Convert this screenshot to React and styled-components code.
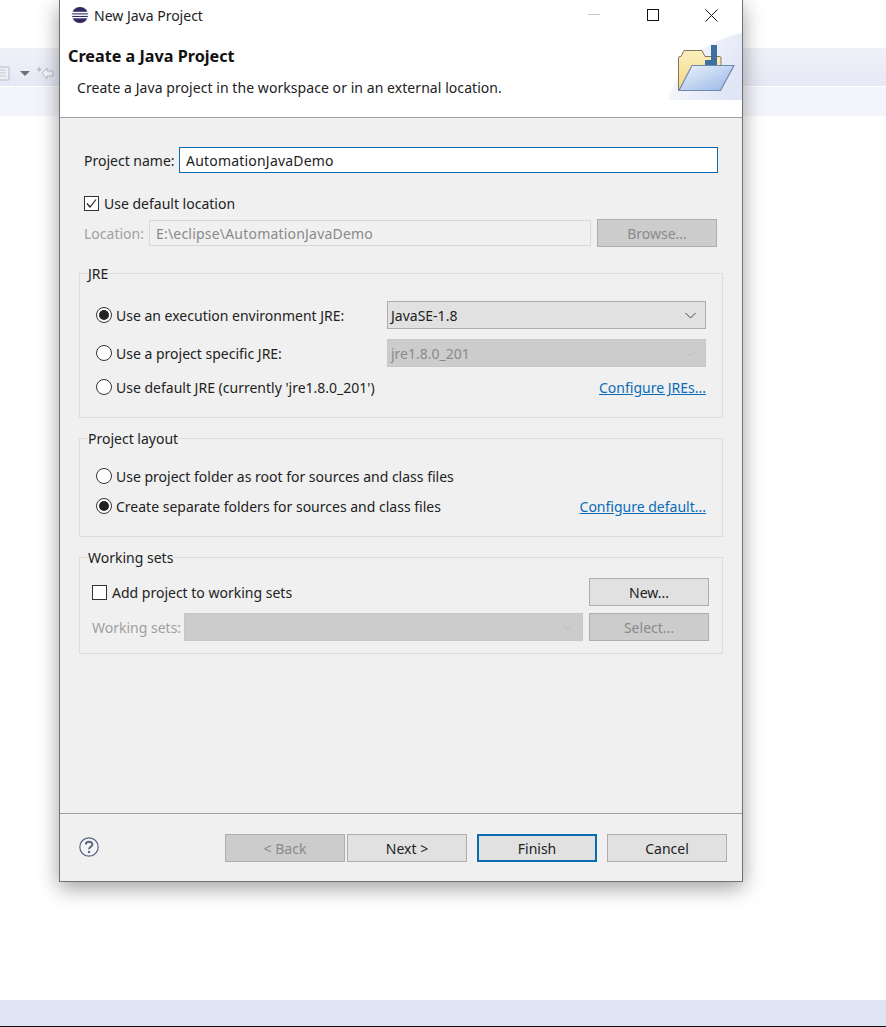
import React from "react";
import styled, { createGlobalStyle } from "styled-components";

const GlobalStyle = createGlobalStyle`
  html, body {
    margin: 0;
    padding: 0;
    background: #fff;
  }
  body {
    font-family: "Noto Sans", "Open Sans", Arial, sans-serif;
    font-size: 14px;
    color: #1a1a1a;
  }
`;

const Desktop = styled.div`
  position: relative;
  width: 886px;
  height: 1027px;
  overflow: hidden;
  display: flex;
  flex-direction: column;
  background: #fff;
`;

const Toolbar = styled.div`
  margin-top: 48px;
  height: 38px;
  flex: none;
  box-sizing: content-box;
  padding-top: 0;
  display: flex;
  align-items: flex-end;
  background: linear-gradient(#f0f1f6 0, #f0f1f6 4px, #eef0f9 5px, #e6e9f5 100%);
  border-bottom: 1px solid #fff;
`;

const SubBar = styled.div`
  height: 29px;
  flex: none;
  background: #f4f5fb;
`;

const BottomBand = styled.div`
  margin-top: auto;
  height: 26px;
  flex: none;
  background: #dfe4f4;
  border-bottom: 1px solid #111;
`;

const Dialog = styled.div`
  position: absolute;
  left: 59px;
  top: 0;
  width: 684px;
  height: 882px;
  box-sizing: border-box;
  border: 1px solid #717171;
  border-top: none;
  background: #f0f0f0;
  display: flex;
  flex-direction: column;
  box-shadow: 0 6px 20px rgba(0, 0, 0, 0.38);
`;

const TitleBar = styled.div`
  height: 30px;
  flex: none;
  background: #fff;
  display: flex;
  align-items: center;
  padding: 0 1px 0 11px;
  gap: 5px;
  font-size: 14px;
  color: #222;
`;

const WindowButtons = styled.div`
  margin-left: auto;
  display: flex;
  align-items: center;
`;

const WindowButton = styled.div`
  width: 59px;
  height: 30px;
  display: flex;
  align-items: center;
  justify-content: center;
`;

const Banner = styled.div`
  height: 88px;
  flex: none;
  box-sizing: border-box;
  background: #fff;
  border-bottom: 1px solid #a0a0a0;
  display: flex;
  justify-content: space-between;
  align-items: flex-start;
`;

const BannerText = styled.div`
  padding: 15px 0 0 8px;
`;

const BannerTitle = styled.div`
  font-weight: 700;
  font-size: 16.2px;
  line-height: 22px;
  color: #111;
`;

const BannerDesc = styled.div`
  margin: 10px 0 0 9px;
  line-height: 22px;
  letter-spacing: 0.06px;
  color: #222;
`;

const BannerArt = styled.svg`
  width: 76px;
  height: 70px;
  flex: none;
`;

const Form = styled.div`
  flex: 1;
  padding: 29px 19px 0;
  border-bottom: 1px solid #a0a0a0;
`;

const Row = styled.div`
  display: flex;
  align-items: center;
  min-height: ${(p) => p.$h || 20}px;
  margin-top: ${(p) => p.$top || 0}px;
  padding-left: ${(p) => p.$indent || 0}px;
  padding-right: ${(p) => p.$end || 0}px;
`;

const Label = styled.span`
  height: 20px;
  line-height: 22px;
  white-space: nowrap;
  color: ${(p) => (p.$off ? "#a0a0a0" : "#222")};
  width: ${(p) => (p.$w ? `${p.$w}px` : "auto")};
  flex: none;
`;

const TextField = styled.div`
  box-sizing: border-box;
  height: 26px;
  flex: 1;
  padding: 0 6px;
  display: flex;
  align-items: center;
  letter-spacing: 0.2px;
  border: 1px solid ${(p) => (p.$off ? "#d9d9d9" : "#0a6cb0")};
  background: ${(p) => (p.$off ? "#f0f0f0" : "#fff")};
  color: ${(p) => (p.$off ? "#8a8a8a" : "#222")};
`;

const CheckBox = styled.span`
  box-sizing: border-box;
  width: 15px;
  height: 15px;
  flex: none;
  margin-right: 5px;
  border: 1px solid #333;
  background: #fff;
  display: flex;
  align-items: center;
  justify-content: center;
`;

const Radio = styled.span`
  box-sizing: border-box;
  width: 16px;
  height: 16px;
  flex: none;
  margin-right: 4px;
  border: 1px solid #333;
  border-radius: 50%;
  background: #fff;
  display: flex;
  align-items: center;
  justify-content: center;

  &::after {
    content: "";
    display: ${(p) => (p.$on ? "block" : "none")};
    width: 10px;
    height: 10px;
    border-radius: 50%;
    background: #222;
  }
`;

const Button = styled.div`
  box-sizing: border-box;
  width: 120px;
  height: 28px;
  flex: none;
  display: flex;
  align-items: center;
  justify-content: center;
  border: ${(p) => (p.$default ? "2px solid #0a6cb0" : "1px solid #adadad")};
  background: ${(p) => (p.$off ? "#cccccc" : "#e1e1e1")};
  color: ${(p) => (p.$off ? "#8a8a8a" : "#222")};
  margin-left: ${(p) => (p.$push ? "auto" : `${p.$gap || 0}px`)};
`;

const Group = styled.fieldset`
  margin: ${(p) => p.$top || 10}px 0 0;
  padding: 0;
  border: 1px solid #dcdcdc;
  min-width: 0;
`;

const GroupBody = styled.div`
  padding: ${(p) => p.$pad};
`;

const Legend = styled.legend`
  margin-left: 8px;
  padding: 0;
  height: 20px;
  line-height: 22px;
  color: #222;
`;

const Select = styled.div`
  box-sizing: border-box;
  height: 28px;
  flex: 1;
  padding: 0 9px 0 3px;
  display: flex;
  align-items: center;
  justify-content: space-between;
  border: 1px solid ${(p) => (p.$off ? "#c8c8c8" : "#adadad")};
  background: ${(p) => (p.$off ? "#cccccc" : "#e1e1e1")};
  color: ${(p) => (p.$off ? "#8a8a8a" : "#222")};
`;

const Chevron = styled.svg`
  width: 11px;
  height: 7px;
  flex: none;
  fill: none;
  stroke: ${(p) => (p.$off ? "#bdbdbd" : "#444")};
`;

const Link = styled.a`
  margin-left: auto;
  height: 20px;
  line-height: 22px;
  color: #0a6cb8;
  text-decoration: underline;
  white-space: nowrap;
`;

const Footer = styled.div`
  height: 67px;
  flex: none;
  box-sizing: border-box;
  display: flex;
  align-items: flex-start;
  padding: 20px 15px 0 19px;
`;

const Help = styled.svg`
  width: 20px;
  height: 20px;
  flex: none;
  margin: 3px 126px 0 0;
`;

const Chev = ({ off }) => (
  <Chevron $off={off} viewBox="0 0 11 7">
    <path d="M0.5 1 L5.5 6 L10.5 1" />
  </Chevron>
);

const Check = () => (
  <svg width="13" height="13" viewBox="0 0 13 13" fill="none" stroke="#222" strokeWidth="1.2">
    <path d="M2 6.5 L5 10 L11 2.5" />
  </svg>
);

const EclipseIcon = () => (
  <svg width="18" height="18" viewBox="0 0 18 18">
    <circle cx="9" cy="9" r="8.6" fill="#d8b98c" opacity="0.5" />
    <circle cx="9" cy="9" r="8" fill="#2f2a66" />
    <rect x="0.8" y="5.8" width="16.4" height="1.5" fill="#fff" />
    <rect x="0.8" y="8.4" width="16.4" height="1.5" fill="#fff" />
    <rect x="1.2" y="11" width="15.6" height="1.3" fill="#fff" />
  </svg>
);

const FolderArt = () => (
  <BannerArt viewBox="0 0 76 70">
    <defs>
      <linearGradient id="swoosh" x1="0" y1="0" x2="1" y2="0.5">
        <stop offset="0" stopColor="#fff" />
        <stop offset="1" stopColor="#e1e6f6" />
      </linearGradient>
      <linearGradient id="back" x1="0" y1="0" x2="0" y2="1">
        <stop offset="0" stopColor="#fdf0bf" />
        <stop offset="1" stopColor="#f2d684" />
      </linearGradient>
      <linearGradient id="front" x1="0" y1="0" x2="1" y2="1">
        <stop offset="0" stopColor="#eef4fd" />
        <stop offset="1" stopColor="#96b6e6" />
      </linearGradient>
    </defs>
    <path d="M2 70 C12 35 40 10 76 3 V70 Z" fill="url(#swoosh)" />
    <path d="M12.500 60 V28 Q12.500 26.500 14 26.500 H15 L18 20.500 H36 L39 26.500 H53 Q55 26.500 55 28 V40 L40 60 Z" fill="url(#back)" stroke="#84765a" strokeWidth="1" />
    <path d="M45 15 H51 V35 H39 V30 H45 Z" fill="#3d709f" />
    <path d="M26 35.500 H68 L54.500 60.500 H13 Z" fill="url(#front)" stroke="#6f88ad" strokeWidth="1.200" />
  </BannerArt>
);

const HelpIcon = () => (
  <Help viewBox="0 0 20 20">
    <circle cx="10" cy="10" r="9.2" fill="#f4f5f8" stroke="#5b6580" strokeWidth="1.200" />
    <path d="M6.800 7.600 C6.800 3.800 13.400 3.800 13.400 7.400 C13.400 9.800 10 9.800 10 12.300" fill="none" stroke="#5b6580" strokeWidth="1.900" />
    <circle cx="10" cy="15" r="1.200" fill="#5b6580" />
  </Help>
);

const ToolbarIcons = () => (
  <svg width="56" height="24" viewBox="0 0 56 24" fill="none">
    <path d="M-2 5 H9 V18 H-2" fill="#eef0f6" stroke="#b9bcc4" />
    <path d="M0 8 H6 M0 11 H6 M0 14 H6" stroke="#c3c6ce" />
    <path d="M20 9 H30 L25 14 Z" fill="#6c6f78" />
    <path d="M42 11 L47 6 V9 H53 V14 H47 V17 Z" stroke="#b9bdc6" fill="#f6f7fb" />
    <path d="M39 5 V10 M37 7.500 H41.500" stroke="#aeb2bc" />
  </svg>
);

export default function App() {
  return (
    <>
      <GlobalStyle />
      <Desktop>
        <Toolbar>
          <ToolbarIcons />
        </Toolbar>
        <SubBar />
        <BottomBand />

        <Dialog>
          <TitleBar>
            <EclipseIcon />
            New Java Project
            <WindowButtons>
              <WindowButton>
                <svg width="12" height="12" viewBox="0 0 12 12">
                  <path d="M0 5.500 H12" stroke="#c8c8c8" />
                </svg>
              </WindowButton>
              <WindowButton>
                <svg width="12" height="12" viewBox="0 0 12 12" fill="none">
                  <rect x="0.500" y="0.500" width="11" height="11" stroke="#111" />
                </svg>
              </WindowButton>
              <WindowButton>
                <svg width="13" height="13" viewBox="0 0 13 13">
                  <path d="M0.500 0.500 L12.500 12.500 M12.500 0.500 L0.500 12.500" stroke="#111" />
                </svg>
              </WindowButton>
            </WindowButtons>
          </TitleBar>

          <Banner>
            <BannerText>
              <BannerTitle>Create a Java Project</BannerTitle>
              <BannerDesc>Create a Java project in the workspace or in an external location.</BannerDesc>
            </BannerText>
            <FolderArt />
          </Banner>

          <Form>
            <Row $h={26} $indent={5} $end={5}>
              <Label $w={95}>Project name:</Label>
              <TextField>AutomationJavaDemo</TextField>
            </Row>
            <Row $top={20} $indent={5}>
              <CheckBox>
                <Check />
              </CheckBox>
              <Label>Use default location</Label>
            </Row>
            <Row $h={28} $top={6} $indent={5} $end={6}>
              <Label $off $w={65}>Location:</Label>
              <TextField $off>E:\eclipse\AutomationJavaDemo</TextField>
              <Button $off $gap={6}>Browse...</Button>
            </Row>

            <Group $top={16}>
              <Legend>JRE</Legend>
              <GroupBody $pad="18px 16px 20px">
                <Row $h={28}>
                  <Radio $on />
                  <Label $w={271}>Use an execution environment JRE:</Label>
                  <Select>JavaSE-1.8<Chev /></Select>
                </Row>
                <Row $h={28} $top={10}>
                  <Radio />
                  <Label $w={271}>Use a project specific JRE:</Label>
                  <Select $off>jre1.8.0_201<Chev off /></Select>
                </Row>
                <Row $top={10}>
                  <Radio />
                  <Label>Use default JRE (currently 'jre1.8.0_201')</Label>
                  <Link>Configure JREs...</Link>
                </Row>
              </GroupBody>
            </Group>

            <Group>
              <Legend>Project layout</Legend>
              <GroupBody $pad="18px 16px 20px">
                <Row>
                  <Radio />
                  <Label>Use project folder as root for sources and class files</Label>
                </Row>
                <Row $top={10}>
                  <Radio $on />
                  <Label>Create separate folders for sources and class files</Label>
                  <Link>Configure default...</Link>
                </Row>
              </GroupBody>
            </Group>

            <Group>
              <Legend>Working sets</Legend>
              <GroupBody $pad="11px 13px 12px 12px">
                <Row $h={28}>
                  <CheckBox />
                  <Label>Add project to working sets</Label>
                  <Button $push>New...</Button>
                </Row>
                <Row $h={28} $top={7}>
                  <Label $off $w={92}>Working sets:</Label>
                  <Select $off>&nbsp;<Chev off /></Select>
                  <Button $off $gap={6}>Select...</Button>
                </Row>
              </GroupBody>
            </Group>
          </Form>

          <Footer>
            <HelpIcon />
            <Button $off>&lt; Back</Button>
            <Button $gap={2}>Next &gt;</Button>
            <Button $default $gap={10}>Finish</Button>
            <Button $gap={10}>Cancel</Button>
          </Footer>
        </Dialog>
      </Desktop>
    </>
  );
}
